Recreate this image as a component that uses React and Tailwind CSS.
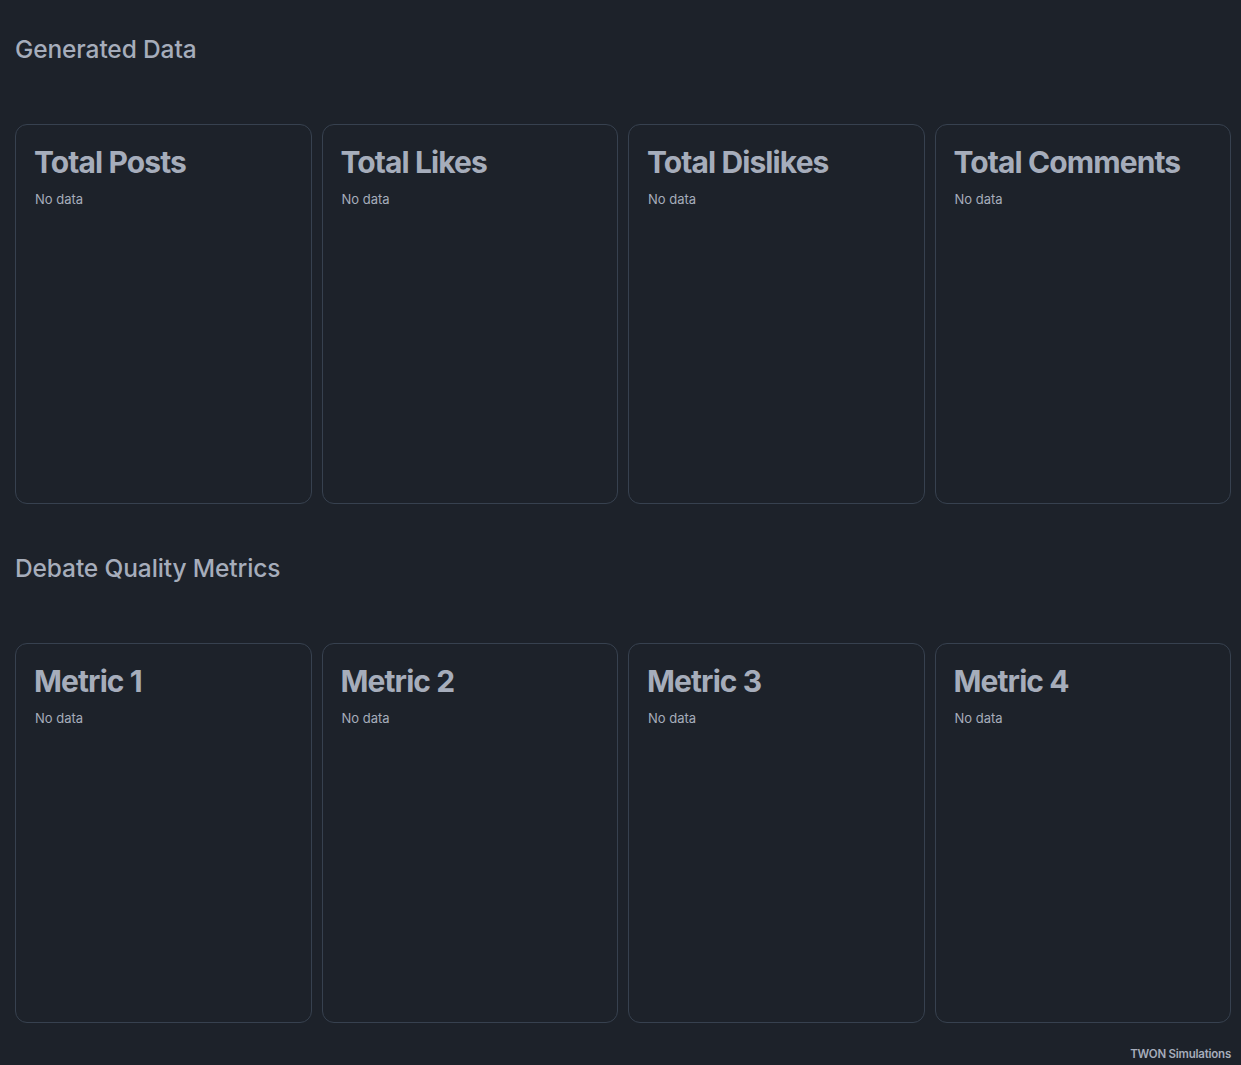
import React from "react";

const generated = ["Total Posts", "Total Likes", "Total Dislikes", "Total Comments"];
const metrics = ["Metric 1", "Metric 2", "Metric 3", "Metric 4"];

function StatCard({ title }) {
  return (
    <div className="h-[380px] rounded-xl border border-[#37414f] pl-[18px] pr-5 pt-[19px]">
      <h3 className="text-[30px] leading-[36px] font-bold tracking-[-0.03em] text-[#a6adbb]">{title}</h3>
      <p className="mt-[11px] pl-px text-[13px] leading-4 text-[#a6adbb]">No data</p>
    </div>
  );
}

function Section({ heading, items }) {
  return (
    <section>
      <h2 className="text-[24.5px] leading-8 font-medium tracking-[-0.005em] text-[#a6adbb]">{heading}</h2>
      <div className="mt-[59px] grid grid-cols-4 gap-[10px]">
        {items.map((t) => (
          <StatCard key={t} title={t} />
        ))}
      </div>
    </section>
  );
}

export default function App() {
  return (
    <div className="min-h-[1065px] bg-[#1d222a] pl-[15px] pr-[10px] pt-[33px] font-['Inter',sans-serif]">
      <Section heading="Generated Data" items={generated} />
      <div className="h-[48px]" />
      <Section heading="Debate Quality Metrics" items={metrics} />
      <footer className="mt-[23px] flex justify-end text-[11.5px] leading-4 font-semibold tracking-[-0.02em] text-[#a6adbb]">
        TWON Simulations
      </footer>
    </div>
  );
}
